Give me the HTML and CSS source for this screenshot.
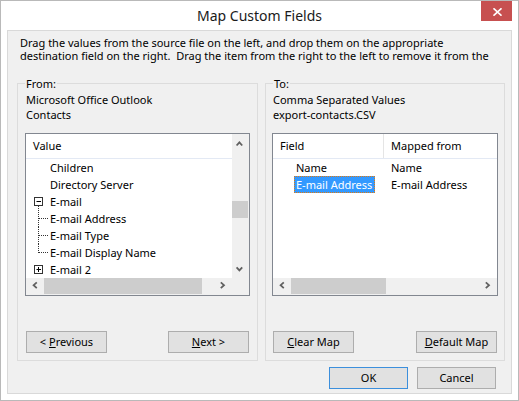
FILE: index.html
```html
<!DOCTYPE html>
<html>
<head>
<meta charset="utf-8">
<title>Map Custom Fields</title>
<link rel="stylesheet" href="styles.css">
</head>
<body>
<div class="window">
  <div class="titlebar">
    <span class="title">Map Custom Fields</span>
    <div class="close">
      <svg width="9" height="8" viewBox="0 0 9 8"><path d="M0.5 0.3 L8.5 7.7 M8.5 0.3 L0.5 7.7" stroke="#fff" stroke-width="1.6" fill="none"/></svg>
    </div>
  </div>
  <div class="client">
    <p class="desc">Drag the values from the source file on the left, and drop them on the appropriate
destination field on the right.  Drag the item from the right to the left to remove it from the</p>
    <div class="groups">
      <div class="group">
        <span class="legend">From:</span>
        <div class="src">Microsoft Office Outlook</div>
        <div class="src">Contacts</div>
        <div class="list list-left">
          <div class="content">
            <div class="header">Value</div>
            <div class="row"><span class="gutter"></span><span class="item">Children</span></div>
            <div class="row"><span class="gutter"></span><span class="item">Directory Server</span></div>
            <div class="row"><span class="gutter"><svg width="16" height="17" viewBox="0 0 16 17"><rect x="2.5" y="4.5" width="8" height="8" fill="#fff" stroke="#333"/><path d="M4.5 8.5 H9" stroke="#000"/><path d="M6.5 13 V17" stroke="#333" stroke-dasharray="1 1"/></svg></span><span class="item">E-mail</span></div>
            <div class="row"><span class="gutter"><svg width="16" height="17" viewBox="0 0 16 17"><path d="M6.5 0 V17 M7 8.5 H16" stroke="#333" stroke-dasharray="1 1"/></svg></span><span class="item">E-mail Address</span></div>
            <div class="row"><span class="gutter"><svg width="16" height="17" viewBox="0 0 16 17"><path d="M6.5 0 V17 M7 8.5 H16" stroke="#333" stroke-dasharray="1 1"/></svg></span><span class="item">E-mail Type</span></div>
            <div class="row"><span class="gutter"><svg width="16" height="17" viewBox="0 0 16 17"><path d="M6.5 0 V9 M7 8.5 H16" stroke="#333" stroke-dasharray="1 1"/></svg></span><span class="item">E-mail Display Name</span></div>
            <div class="row"><span class="gutter"><svg width="16" height="17" viewBox="0 0 16 17"><rect x="2.5" y="4.5" width="8" height="8" fill="#fff" stroke="#333"/><path d="M4.5 8.5 H9 M6.5 6 V11" stroke="#000"/></svg></span><span class="item">E-mail 2</span></div>
          </div>
          <div class="vscroll">
            <div class="sbtn"><svg width="17" height="17" viewBox="0 0 17 17"><polyline points="4.6,11.5 7.4,8.4 10.2,11.5" stroke="#606060" stroke-width="1.8" fill="none"/></svg></div>
            <div class="vtrack"><div class="vthumb"></div></div>
            <div class="sbtn"><svg width="17" height="17" viewBox="0 0 17 17"><polyline points="4.6,6.3 7.4,9.4 10.2,6.3" stroke="#606060" stroke-width="1.8" fill="none"/></svg></div>
          </div>
          <div class="hscroll">
            <div class="sbtn"><svg width="17" height="17" viewBox="0 0 17 17"><polyline points="10.8,4.3 7.6,7.2 10.8,10.1" stroke="#606060" stroke-width="1.8" fill="none"/></svg></div>
            <div class="hthumb thumb-left"></div>
            <div class="hfill"></div>
            <div class="sbtn"><svg width="17" height="17" viewBox="0 0 17 17"><polyline points="5.8,4.3 9,7.2 5.8,10.1" stroke="#606060" stroke-width="1.8" fill="none"/></svg></div>
          </div>
          <div class="corner"></div>
        </div>
        <div class="btnrow">
          <button class="btn">&lt; <u>P</u>revious</button>
          <button class="btn"><u>N</u>ext &gt;</button>
        </div>
      </div>
      <div class="group group-to">
        <span class="legend">To:</span>
        <div class="src">Comma Separated Values</div>
        <div class="src">export-contacts.CSV</div>
        <div class="list list-right">
          <div class="content">
            <div class="header cols">
              <span class="hcell c1">Field</span>
              <span class="hcell c2">Mapped from</span>
            </div>
            <div class="mrow"><span class="fcell"><span class="fname">Name</span></span><span class="mcell">Name</span></div>
            <div class="mrow"><span class="fcell"><span class="fname selected">E-mail Address</span></span><span class="mcell">E-mail Address</span></div>
          </div>
          <div class="hscroll">
            <div class="sbtn"><svg width="17" height="17" viewBox="0 0 17 17"><polyline points="10.8,4.3 7.6,7.2 10.8,10.1" stroke="#606060" stroke-width="1.8" fill="none"/></svg></div>
            <div class="hthumb thumb-right"></div>
            <div class="hfill"></div>
            <div class="sbtn"><svg width="17" height="17" viewBox="0 0 17 17"><polyline points="5.8,4.3 9,7.2 5.8,10.1" stroke="#606060" stroke-width="1.8" fill="none"/></svg></div>
          </div>
        </div>
        <div class="btnrow">
          <button class="btn"><u>C</u>lear Map</button>
          <button class="btn"><u>D</u>efault Map</button>
        </div>
      </div>
    </div>
    <div class="dlgbtns">
      <button class="btn btn-dlg btn-default">OK</button>
      <button class="btn btn-dlg">Cancel</button>
    </div>
  </div>
</div>
</body>
</html>
```
FILE: styles.css
```css
* { box-sizing: border-box; }
html, body { margin: 0; padding: 0; }
body {
  font-family: "Noto Sans", "Open Sans", sans-serif;
  font-size: 11px;
  color: #000;
  background: #fff;
}
.window {
  width: 519px;
  height: 401px;
  border: 1px solid #b9b9b9;
  background: #fff;
  padding: 0 6px 6px;
  display: flex;
  flex-direction: column;
}
.titlebar {
  height: 29px;
  flex: none;
  display: grid;
  grid-template-columns: 1fr auto 1fr;
  align-items: start;
}
.title {
  grid-column: 2;
  font-size: 14px;
  line-height: 20px;
  margin-top: 5px;
  color: #1a1a1a;
}
.close {
  grid-column: 3;
  justify-self: end;
  width: 31px;
  height: 20px;
  background: #c75050;
  display: flex;
  align-items: center;
  justify-content: center;
  padding: 2px 0 0 1px;
}
.close svg { display: block; }
.client {
  flex: 1;
  border: 1px solid #d9d9d9;
  background: #f0f0f0;
  display: flex;
  flex-direction: column;
}
.desc {
  margin: 0;
  height: 52px;
  flex: none;
  padding: 5px 0 0 12px;
  line-height: 13px;
  white-space: pre;
  overflow: hidden;
}
.groups {
  display: grid;
  grid-template-columns: 241px 240px;
  column-gap: 7px;
  padding: 0 6px 0 9px;
  height: 278px;
  flex: none;
}
.group {
  position: relative;
  border: 1px solid #dcdcdc;
  padding: 8px 7px 7px;
  display: flex;
  flex-direction: column;
}
.group-to { padding: 8px 6px 7px; }
.legend {
  position: absolute;
  top: -7px;
  left: 7px;
  padding: 0 1px;
  background: #f0f0f0;
  line-height: 14px;
}
.src {
  line-height: 15px;
  padding-left: 1px;
}
.list {
  margin-top: 11px;
  height: 163px;
  flex: none;
  border: 1px solid #828790;
  background: #fff;
  display: grid;
  overflow: hidden;
}
.list-left {
  grid-template-columns: 1fr 17px;
  grid-template-rows: 1fr 17px;
}
.list-right {
  grid-template-columns: 1fr;
  grid-template-rows: 1fr 17px;
}
.content { overflow: hidden; min-width: 0; }
.header {
  height: 25px;
  line-height: 24px;
  border-bottom: 1px solid #e3e9f4;
  padding-left: 7px;
  white-space: nowrap;
}
.header.cols {
  padding-left: 0;
  display: grid;
  grid-template-columns: 111px 1fr;
}
.hcell { padding-left: 7px; }
.hcell.c1 { border-right: 1px solid #e5e5e5; }
.row {
  height: 17px;
  display: flex;
  align-items: center;
  padding-left: 6px;
  white-space: nowrap;
}
.gutter {
  width: 16px;
  height: 17px;
  flex: none;
  margin-right: 2px;
}
.gutter svg { display: block; }
.item { line-height: 17px; }
.mrow {
  height: 17px;
  display: grid;
  grid-template-columns: 111px 1fr;
  white-space: nowrap;
}
.fcell { padding-left: 21px; }
.fname {
  display: inline-block;
  height: 17px;
  line-height: 15px;
  padding: 0 2px 0 1px;
  border: 1px solid transparent;
}
.fname.selected {
  background: #3399ff;
  color: #fff;
  border: 1px dotted #e07a10;
}
.mcell { padding-left: 7px; line-height: 17px; }
.vscroll {
  background: #f0f0f0;
  display: flex;
  flex-direction: column;
}
.vtrack { flex: 1; }
.vthumb {
  margin-top: 50px;
  width: 16px;
  height: 17px;
  background: #cdcdcd;
}
.hscroll {
  background: #f0f0f0;
  display: flex;
}
.sbtn {
  width: 17px;
  height: 17px;
  flex: none;
}
.sbtn svg { display: block; }
.hthumb {
  height: 16px;
  background: #cdcdcd;
  margin-left: 1px;
  flex: none;
}
.thumb-left { width: 158px; }
.thumb-right { width: 95px; }
.hfill { flex: 1; }
.corner { background: #f0f0f0; }
.btnrow {
  margin-top: auto;
  display: flex;
  justify-content: space-between;
  padding: 0 1px;
}
.btn {
  width: 81px;
  height: 22px;
  margin: 0;
  padding: 0;
  font-family: "Noto Sans", "Open Sans", sans-serif;
  font-size: 11px;
  color: #000;
  background: #e1e1e1;
  border: 1px solid #adadad;
  border-radius: 0;
  line-height: 18px;
}
.btn u { text-decoration: underline; text-underline-offset: 1px; }
.dlgbtns {
  margin-top: 6px;
  display: flex;
  justify-content: flex-end;
  gap: 9px;
  padding-right: 15px;
}
.btn-dlg { width: 79px; }
.btn-default { border-color: #3c8fdc; }
```
